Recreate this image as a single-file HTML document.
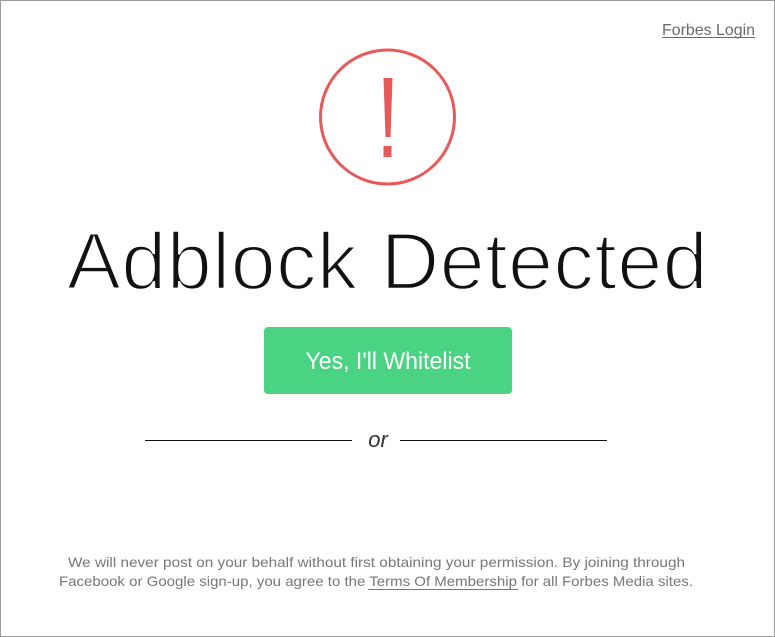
<!DOCTYPE html>
<html><head><meta charset="utf-8"><style>
html,body{margin:0;padding:0}
body{width:775px;height:637px;box-sizing:border-box;border:1px solid #9a9a9a;background:#fff;position:relative;overflow:hidden;font-family:"Liberation Sans",sans-serif}
.a{position:absolute}
h1{position:absolute;left:0;top:211px;width:773px;margin:0;text-align:center;font-weight:normal;font-size:81px;line-height:100px;letter-spacing:0.4px;color:#111;-webkit-text-stroke:2.4px #fff;white-space:nowrap}
</style></head><body>
<svg class="a" style="left:-1px;top:-1px" width="775" height="637">
<text x="755" y="35" text-anchor="end" font-size="16" fill="#6a6a6a" textLength="93" lengthAdjust="spacingAndGlyphs" font-family="Liberation Sans">Forbes Login</text>
<line x1="662" y1="37.5" x2="755" y2="37.5" stroke="#6a6a6a" stroke-width="1"/>
<circle cx="387.5" cy="117" r="67" fill="none" stroke="#e85a5a" stroke-width="3"/>
<path d="M383.5 78 L392.5 78 L390.5 137 L385.5 137 Z" fill="#e85a5a"/>
<rect x="383.5" y="146" width="8" height="11" fill="#e85a5a"/>
<rect x="264" y="327" width="248" height="67" rx="4" fill="#4ad383"/>
<text x="388" y="369" text-anchor="middle" font-size="24" fill="#fff" textLength="165" lengthAdjust="spacingAndGlyphs" font-family="Liberation Sans">Yes, I'll Whitelist</text>
<line x1="145" y1="440.5" x2="352" y2="440.5" stroke="#111" stroke-width="1"/>
<line x1="400" y1="440.5" x2="607" y2="440.5" stroke="#111" stroke-width="1"/>
<text x="378" y="447" text-anchor="middle" font-size="22" font-style="italic" fill="#333" font-family="Liberation Sans">or</text>
<g font-size="14" fill="#777" font-family="Liberation Sans">
<text x="68" y="567" textLength="617" lengthAdjust="spacingAndGlyphs">We will never post on your behalf without first obtaining your permission. By joining through</text>
<text x="59" y="586" textLength="634" lengthAdjust="spacingAndGlyphs">Facebook or Google sign-up, you agree to the Terms Of Membership for all Forbes Media sites.</text>
</g>
<line x1="368" y1="589.5" x2="518" y2="589.5" stroke="#777" stroke-width="1"/>
</svg>
<h1>Adblock Detected</h1>
</body></html>
